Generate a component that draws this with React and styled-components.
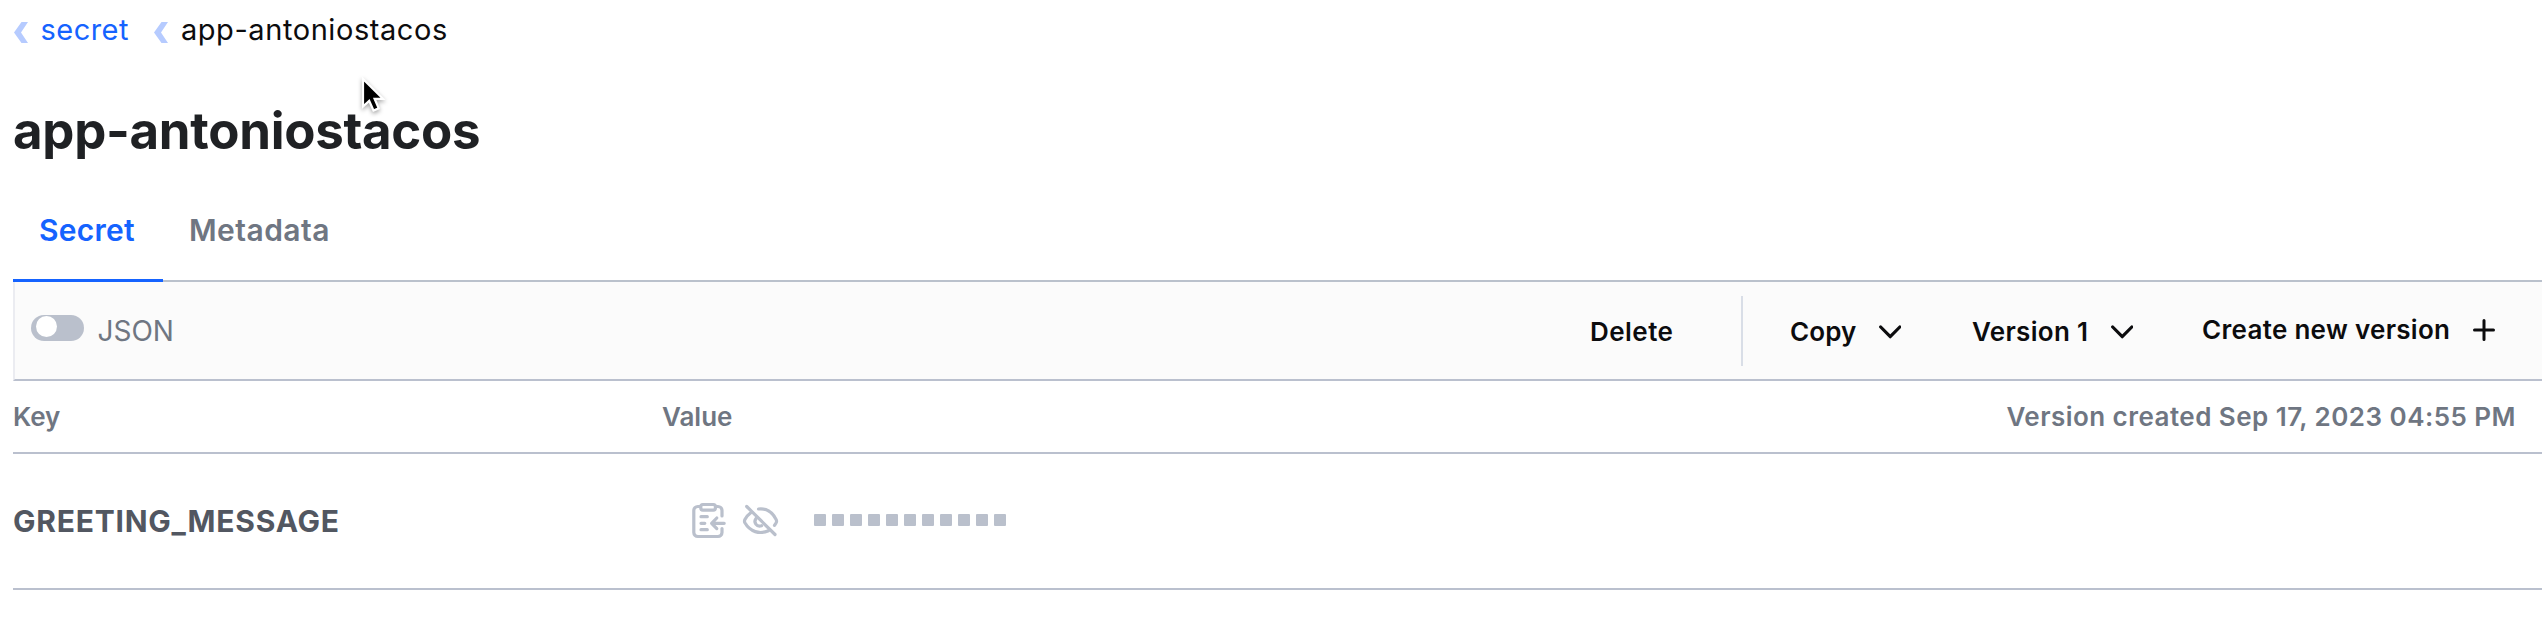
import React from "react";
import styled, { createGlobalStyle } from "styled-components";

const GlobalStyle = createGlobalStyle`
  * { box-sizing: border-box; }
  body {
    margin: 0;
    background: #fff;
    font-family: Inter, "Liberation Sans", sans-serif;
    overflow: hidden;
  }
  button { font: inherit; border: 0; background: none; padding: 0; }
`;

const Page = styled.main`
  position: relative;
  height: 628px;
  padding-left: 13px;
`;

const Breadcrumbs = styled.nav`
  display: flex;
  align-items: center;
  height: 60px;
  font-size: 29px;
  line-height: 60px;
  white-space: nowrap;
`;

const Crumb = styled.span`
  display: flex;
  align-items: center;
  margin-right: 24.5px;
  color: ${(p) => (p.$current ? "#0c0c0e" : "#1563ff")};
  letter-spacing: ${(p) => (p.$current ? "0.57px" : "0.47px")};

  svg { margin: 5px 12.5px 0 1px; }
`;

const Title = styled.h1`
  margin: 41px 0 0;
  font-size: 51px;
  font-weight: 700;
  line-height: 60px;
  letter-spacing: -0.3px;
  color: #1f2124;
`;

const Tabs = styled.div`
  display: flex;
  height: 121px;
  padding-top: 20px;
  border-bottom: 2px solid #bac1cc;
`;

const Tab = styled.button`
  height: 101px;
  padding: 0 26px;
  border-bottom: 3px solid ${(p) => (p.$active ? "#1563ff" : "transparent")};
  color: ${(p) => (p.$active ? "#1563ff" : "#6f7682")};
  font-size: 30px;
  font-weight: 600;
  line-height: 98px;
  letter-spacing: ${(p) => (p.$active ? "0.26px" : "0.45px")};
  width: ${(p) => (p.$active ? "150px" : "190px")};
  text-align: left;
  white-space: nowrap;
`;

const Toolbar = styled.div`
  display: flex;
  align-items: center;
  height: 99px;
  padding-left: 16px;
  background: #fbfbfb;
  border-left: 2px solid #ebecf1;
  border-bottom: 2px solid #bac0ce;
`;

const Toggle = styled.span`
  width: 53px;
  height: 26px;
  margin-bottom: 5px;
  padding: 0.5px 4.5px;
  border-radius: 13px;
  background: #bac0cc;

  &::after {
    content: "";
    display: block;
    width: 21.5px;
    height: 21.5px;
    border-radius: 50%;
    background: #fff;
  }
`;

const ToggleLabel = styled.span`
  flex: 1;
  padding: 1px 0 0 13.5px;
  color: #6f7682;
  font-size: 28px;
`;

const Actions = styled.div`
  display: flex;
  align-items: center;
  width: 952px;
  height: 97px;
`;

const Action = styled.button`
  display: flex;
  align-items: center;
  width: ${(p) => p.$width}px;
  padding-top: ${(p) => (p.$raised ? 0 : 2)}px;
  padding-bottom: ${(p) => (p.$raised ? 2 : 0)}px;
  color: #0c0c0e;
  font-size: 26px;
  font-weight: 600;
  letter-spacing: ${(p) => p.$spacing}px;
  white-space: nowrap;

  svg { margin-left: 22.5px; }
`;

const Divider = styled.span`
  width: 2px;
  height: 70px;
  margin-right: 47px;
  background: #d9dee7;
`;

const HeaderRow = styled.div`
  display: flex;
  align-items: center;
  height: 73px;
  border-bottom: 2px solid #bac0ce;
  color: #6f7682;
  font-size: 26px;
  font-weight: 600;
`;

const KeyHeading = styled.span`
  width: 649px;
  letter-spacing: -0.1px;
`;

const ValueHeading = styled.span`
  flex: 1;
  letter-spacing: 0;
`;

const Created = styled.span`
  padding-right: 26px;
  letter-spacing: 0.46px;
`;

const SecretRow = styled.div`
  display: flex;
  align-items: center;
  height: 136px;
  border-bottom: 2px solid #bac0ce;
`;

const SecretKey = styled.span`
  width: 677px;
  color: #525761;
  font-size: 30px;
  font-weight: 700;
  letter-spacing: 0.76px;
`;

const IconButton = styled.button`
  width: 50px;
  height: 43px;
  color: #bac0cc;

  svg { display: block; }
`;

const Mask = styled.span`
  display: flex;
  gap: 6px;
  margin: 0 0 2px 24px;
`;

const MaskBlock = styled.i`
  width: 12px;
  height: 12px;
  border-radius: 1px;
  background: #bac0cc;
`;

const Pointer = styled.svg`
  position: absolute;
  left: 357px;
  top: 74px;
  filter: drop-shadow(0 2px 2px rgba(0, 0, 0, 0.35));
`;

const BackChevron = () => (
  <svg width="14" height="21" viewBox="0 0 14 21">
    <path d="M7.500 0H14L7 10.500 14 21H7.500L0 10.500z" fill="#b6cbff" />
  </svg>
);

const ChevronDown = () => (
  <svg width="22.5" height="14" viewBox="0 0 22.5 14" fill="none" stroke="currentColor" strokeWidth="3.2" strokeLinecap="round" strokeLinejoin="round">
    <path d="M1.700 2l9.550 9.700L20.800 2" />
  </svg>
);

const Plus = () => (
  <svg width="22" height="22" viewBox="0 0 22 22" stroke="currentColor" strokeWidth="3" strokeLinecap="round">
    <path d="M11 1.500v19M1.500 11h19" />
  </svg>
);

const ClipboardCopy = () => (
  <svg width="38" height="40" viewBox="0 0 38 40" fill="none" stroke="currentColor" strokeWidth="3.2" strokeLinecap="round" strokeLinejoin="round">
    <rect x="10.8" y="3.5" width="14.6" height="5.6" rx="2" />
    <path d="M10.500 5.500H7.800a4 4 0 0 0-4 4v22a4 4 0 0 0 4 4H28a4 4 0 0 0 4-4v-4M25.500 5.500H28a4 4 0 0 1 4 4V15" />
    <path d="M11 15.700h6.300M11 22.300h3.800M11 28.700h6.300M34.200 22.300H22M26.800 17l-5.200 5.300 5.200 5.300" />
  </svg>
);

const EyeOff = () => (
  <svg width="40" height="40" viewBox="0 0 40 40" fill="none" stroke="currentColor" strokeWidth="3.2" strokeLinecap="round" strokeLinejoin="round">
    <path d="M6.700 5.500l28.300 28" />
    <path d="M18.500 8c8.500-.9 14.500 4.200 17.700 10.600.5 1.100.5 2.200-.1 3.200l-1.600 2.500" />
    <path d="M10.500 12c-2.500 1.800-4.300 4.100-5.600 6.500-.6 1.200-.6 2.100 0 3.300C10 30.700 19.500 33.800 28.500 29.700" />
    <path d="M16.200 17.300c-3.200 4 .4 9 5.400 7.400" />
  </svg>
);

export default function App() {
  return (
    <Page>
      <GlobalStyle />
      <Breadcrumbs>
        <Crumb><BackChevron />secret</Crumb>
        <Crumb $current><BackChevron />app-antoniostacos</Crumb>
      </Breadcrumbs>
      <Title>app-antoniostacos</Title>
      <Tabs>
        <Tab $active>Secret</Tab>
        <Tab>Metadata</Tab>
      </Tabs>
      <Toolbar>
        <Toggle />
        <ToggleLabel>JSON</ToggleLabel>
        <Actions>
          <Action $width={151} $spacing={0.45}>Delete</Action>
          <Divider />
          <Action $width={182} $spacing={0.09}>Copy<ChevronDown /></Action>
          <Action $width={230} $spacing={0.32}>Version 1<ChevronDown /></Action>
          <Action $width={300} $spacing={0.3} $raised>Create new version<Plus /></Action>
        </Actions>
      </Toolbar>
      <HeaderRow>
        <KeyHeading>Key</KeyHeading>
        <ValueHeading>Value</ValueHeading>
        <Created>Version created Sep 17, 2023 04:55 PM</Created>
      </HeaderRow>
      <SecretRow>
        <SecretKey>GREETING_MESSAGE</SecretKey>
        <IconButton aria-label="Copy value"><ClipboardCopy /></IconButton>
        <IconButton aria-label="Show value"><EyeOff /></IconButton>
        <Mask>
          {Array.from({ length: 11 }, (_, i) => <MaskBlock key={i} />)}
        </Mask>
      </SecretRow>
      <Pointer width="32" height="44" viewBox="0 0 32 44">
        <path d="M6 5v27.500l6.200-5.600 4.300 9.600 5.200-2.200-4.100-9.500h8.400z" fill="#000" stroke="#fff" strokeWidth="2.200" />
      </Pointer>
    </Page>
  );
}
